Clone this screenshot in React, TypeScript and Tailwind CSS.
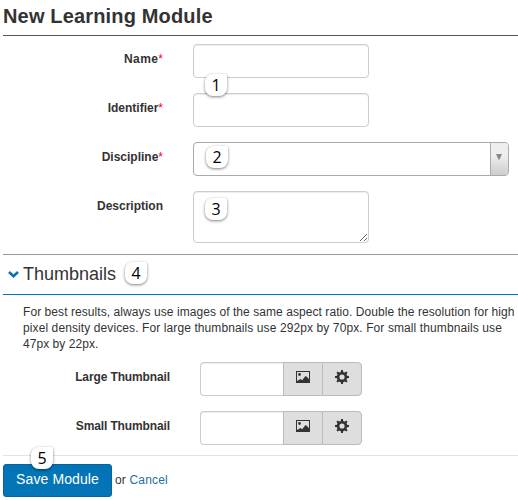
import type { ReactNode } from "react";

const field = "border border-[#ccc] bg-white rounded-[4px] shadow-[inset_0_1px_1px_rgba(0,0,0,0.075)] outline-none block";

function Badge({ n, className }: { n: number; className: string }) {
  return (
    <span
      className={`absolute z-10 flex h-[22px] w-[22px] items-center justify-center rounded-[8px] rounded-tr-[2px] bg-white font-['Open_Sans',sans-serif] text-[16px] leading-none tracking-normal text-black shadow-[0_1px_3px_rgba(0,0,0,0.5)] ${className}`}
    >
      {n}
    </span>
  );
}

function Row({ label, required, className = "", children }: { label: string; required?: boolean; className?: string; children: ReactNode }) {
  return (
    <div className="flex">
      <label className={`w-[163px] shrink-0 pt-[7px] text-right text-[12px] leading-[16px] font-bold ${className}`}>
        {label}
        {required && <span className="font-normal tracking-normal text-[#f00]">*</span>}
      </label>
      <div className="relative ml-[30px]">{children}</div>
    </div>
  );
}

function PictureIcon() {
  return (
    <svg width="14" height="12" viewBox="0 0 14 12" fill="#333">
      <path fillRule="evenodd" d="M0 0h14v12H0zM1 1v10h12V1z" />
      <circle cx="3.5" cy="3.5" r="1.4" />
      <path d="M1 11V10L4.5 8L6.2 9.2L9.5 5L11 6L13 8.2V11Z" />
    </svg>
  );
}

const teeth = [0, 45, 90, 135];

function GearIcon() {
  return (
    <svg width="14" height="14" viewBox="0 0 14 14" fill="#333">
      <circle cx="7" cy="7" r="3.9" fill="none" stroke="#333" strokeWidth="2.6" />
      {teeth.map((a) => (
        <g key={a} transform={`rotate(${a} 7 7)`}>
          <path d="M5.7 2.5L6.1 0h1.8l.4 2.5zM5.7 11.5L6.1 14h1.8l.4-2.5z" />
        </g>
      ))}
    </svg>
  );
}

function ThumbnailRow({ label }: { label: string }) {
  return (
    <div className="flex h-[34px]">
      <label className="w-[170px] shrink-0 pt-[7px] text-right text-[12px] leading-[16px] font-bold tracking-[-0.12px]">{label}</label>
      <div className="ml-[30px] flex w-[162px]">
        <input className={`${field} w-[83px] rounded-r-none border-r-0`} />
        <button className="flex w-[39px] justify-center border border-r-0 border-[#bbb] bg-[#dedede] pt-[8px]">
          <PictureIcon />
        </button>
        <button className="flex w-[40px] justify-center rounded-r-[4px] border border-[#bbb] bg-[#dedede] pt-[7px]">
          <GearIcon />
        </button>
      </div>
    </div>
  );
}

export default function App() {
  return (
    <main className="h-[500px] w-[518px] overflow-hidden bg-white font-['Liberation_Sans',Arial,sans-serif] text-[#333]">
      <h1 className="ml-[3px] h-[36px] border-b border-[#555] pt-[4px] text-[20px] leading-[24px] font-bold tracking-[0.16px]">
        New Learning Module
      </h1>
      <form onSubmit={(e) => e.preventDefault()}>
        <div className="flex flex-col gap-[15px] pt-[8px]">
          <Row label="Name" required className="tracking-[0.4px]">
            <input className={`${field} h-[34px] w-[176px]`} />
            <Badge n={1} className="top-[30px] left-[12px]" />
          </Row>
          <Row label="Identifier" required>
            <input className={`${field} h-[34px] w-[176px]`} />
          </Row>
          <Row label="Discipline" required>
            <div className="flex h-[34px] w-[316px] overflow-hidden rounded-[4px] border border-[#aaa]">
              <div className="flex-1" />
              <div className="flex w-[18px] justify-center border-l border-[#aaa] bg-linear-to-b from-[#eee] from-40% to-[#ccc] pt-[11px]">
                <svg className="-ml-px" width="6" height="6" viewBox="0 0 6 6" fill="#888">
                  <path d="M0 0h6L3.6 5.5H2.4z" />
                </svg>
              </div>
            </div>
            <Badge n={2} className="top-[4px] left-[13px]" />
          </Row>
          <Row label="Description">
            <textarea className={`${field} h-[52px] w-[176px] resize`} />
            <Badge n={3} className="top-[7px] left-[12px]" />
          </Row>
        </div>

        <h2 className="mt-[11px] ml-[3px] flex h-[41px] border-t border-b border-t-[#999] border-b-[#0374b5] pt-[7px] text-[18px] leading-[24px]">
          <svg className="mt-[9px] ml-[5px]" width="11" height="7" viewBox="0 0 11 7" fill="none" stroke="#0374b5" strokeWidth="2.6">
            <path d="M1 1L5.5 5.2L10 1" />
          </svg>
          <span className="relative ml-[4px]">
            Thumbnails
            <Badge n={4} className="top-0 left-[102px]" />
          </span>
        </h2>

        <p className="mt-[9px] ml-[23px] text-[12px] leading-[16px] whitespace-nowrap">
          <span className="tracking-[0.065px]">
            For best results, always use images of the same aspect ratio. Double the resolution for high
          </span>
          <br />
          <span className="tracking-[0.1px]">
            pixel density devices. For large thumbnails use 292px by 70px. For small thumbnails use
          </span>
          <br />
          <span className="tracking-[0.05px]">47px by 22px.</span>
        </p>

        <div className="mt-[10px] flex flex-col gap-[15px]">
          <ThumbnailRow label="Large Thumbnail" />
          <ThumbnailRow label="Small Thumbnail" />
        </div>

        <footer className="relative mt-[10px] ml-[3px] flex border-t border-[#e3e3e3] pt-[8px] text-[12px] leading-[32px]">
          <button className="h-[33px] w-[109px] rounded-[3px] border border-[#0a649c] bg-[#0374b5] pb-[2px] text-[14px] leading-[29px] tracking-[0.1px] text-white">
            Save Module
          </button>
          <span className="ml-[3px] tracking-[0.17px]">
            or <a href="#" className="text-[#1d6fa5]">Cancel</a>
          </span>
          <Badge n={5} className="top-[-9px] left-[28px]" />
        </footer>
      </form>
    </main>
  );
}
